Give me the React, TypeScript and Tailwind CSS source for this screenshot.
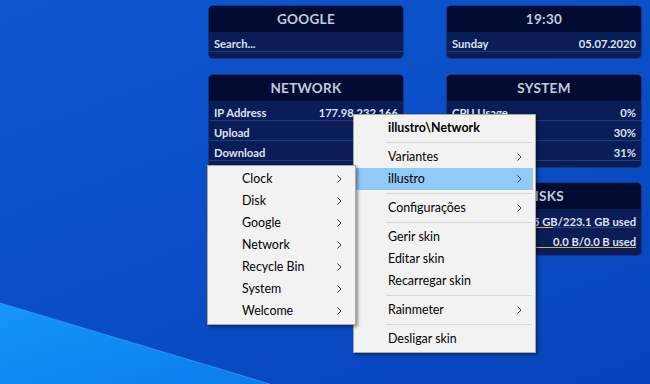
import type { ReactNode } from "react";

type Row = { label: string; value?: string; bar?: number };

const widgetFont = { fontFamily: 'Lato, "Liberation Sans", sans-serif' };
const menuFont = { fontFamily: '"Segoe UI", Lato, "Noto Sans", sans-serif' };

function Widget({ title, rows }: { title: string; rows: Row[] }) {
  return (
    <div
      style={widgetFont}
      className="w-[196px] rounded-[5px] border border-[#163682] bg-[#0a1d57] overflow-hidden pb-[6px]"
    >
      <div className="h-[26px] bg-[#020b31] flex items-center justify-center text-[13.5px] font-bold tracking-[0.3px] text-[#c3cbdd]">
        {title}
      </div>
      {rows.map((r) => (
        <div
          key={r.label}
          className={`relative h-[20px] pt-[6px] px-[5px] flex items-center justify-between text-[11.2px] font-bold text-[#dce3f0] ${
            r.bar === undefined ? "border-b border-[#213f80]" : ""
          }`}
        >
          <span>{r.label}</span>
          <span>{r.value}</span>
          {r.bar !== undefined && (
            <div className="absolute left-[5px] right-[5px] bottom-[1px] h-[1px] bg-[#2a4a8a]">
              <div className="h-full bg-[#e6b431]" style={{ width: `${r.bar}%` }} />
            </div>
          )}
        </div>
      ))}
    </div>
  );
}

function Chevron() {
  return (
    <svg width="5" height="8" viewBox="0 0 5 8" className="shrink-0">
      <path d="M0.5 0.5 L4 4 L0.5 7.5" fill="none" stroke="#3a3a3a" strokeWidth="1" />
    </svg>
  );
}

function Item({
  children,
  sub,
  active,
  bold,
}: {
  children: ReactNode;
  sub?: boolean;
  active?: boolean;
  bold?: boolean;
}) {
  return (
    <div
      className={`h-[22px] flex items-center justify-between pl-[32px] pr-[11px] text-[12.4px] text-black ${
        active ? "bg-[#91c9f7]" : ""
      } ${bold ? "font-bold" : ""}`}
    >
      <span>{children}</span>
      {sub && <Chevron />}
    </div>
  );
}

function Sep() {
  return (
    <div className="h-[7px] flex items-center pl-[30px] pr-[1px]">
      <div className="h-[1px] w-full bg-[#d7d7d7]" />
    </div>
  );
}

export default function App() {
  return (
    <div className="relative w-[650px] h-[384px] overflow-hidden bg-[linear-gradient(160deg,#0d57cd_0%,#0a4fc8_45%,#0744bb_100%)]">
      <svg className="absolute inset-0" width="650" height="384" viewBox="0 0 650 384">
        <defs>
          <linearGradient id="wedge" x1="0" y1="0" x2="1" y2="1">
            <stop offset="0" stopColor="#1496f7" />
            <stop offset="1" stopColor="#0b7ced" />
          </linearGradient>
        </defs>
        <polygon points="0,303 270,384 0,384" fill="url(#wedge)" />
        <line x1="0" y1="303" x2="270" y2="384" stroke="#45a8ff" strokeWidth="1" opacity="0.6" />
      </svg>

      {/* desktop skins */}
      <div className="relative flex gap-[42px] pl-[208px] pt-[5px]">
        <div className="flex flex-col gap-[15px]">
          <Widget title="GOOGLE" rows={[{ label: "Search..." }]} />
          <Widget
            title="NETWORK"
            rows={[
              { label: "IP Address", value: "177.98.232.166" },
              { label: "Upload", value: "0.0 B" },
              { label: "Download", value: "0.0 B" },
            ]}
          />
        </div>
        <div className="flex flex-col gap-[15px]">
          <Widget title="19:30" rows={[{ label: "Sunday", value: "05.07.2020" }]} />
          <div className="flex flex-col gap-[14px]">
            <Widget
              title="SYSTEM"
              rows={[
                { label: "CPU Usage", value: "0%" },
                { label: "RAM Usage", value: "30%" },
                { label: "SWAP Usage", value: "31%" },
              ]}
            />
            <Widget
              title="DISKS"
              rows={[
                { label: "C:", value: "110.5 GB/223.1 GB used", bar: 55 },
                { label: "D:", value: "0.0 B/0.0 B used", bar: 100 },
              ]}
            />
          </div>
        </div>
      </div>

      {/* context menu */}
      <div
        style={menuFont}
        className="absolute left-[353px] top-[114px] w-[183px] bg-[#f2f2f2] border border-[#a8a8a8] p-[2px] shadow-[2px_2px_3px_rgba(0,0,0,0.4)]"
      >
        <Item bold>{"illustro\\Network"}</Item>
        <Sep />
        <Item sub>Variantes</Item>
        <Item sub active>
          illustro
        </Item>
        <Sep />
        <Item sub>Configurações</Item>
        <Sep />
        <Item>Gerir skin</Item>
        <Item>Editar skin</Item>
        <Item>Recarregar skin</Item>
        <Sep />
        <Item sub>Rainmeter</Item>
        <Sep />
        <Item>Desligar skin</Item>
      </div>

      {/* submenu */}
      <div
        style={menuFont}
        className="absolute left-[207px] top-[165px] w-[149px] bg-[#f2f2f2] border border-[#a8a8a8] p-[2px] shadow-[2px_2px_3px_rgba(0,0,0,0.4)]"
      >
        {["Clock", "Disk", "Google", "Network", "Recycle Bin", "System", "Welcome"].map((s) => (
          <Item key={s} sub>
            {s}
          </Item>
        ))}
      </div>
    </div>
  );
}
